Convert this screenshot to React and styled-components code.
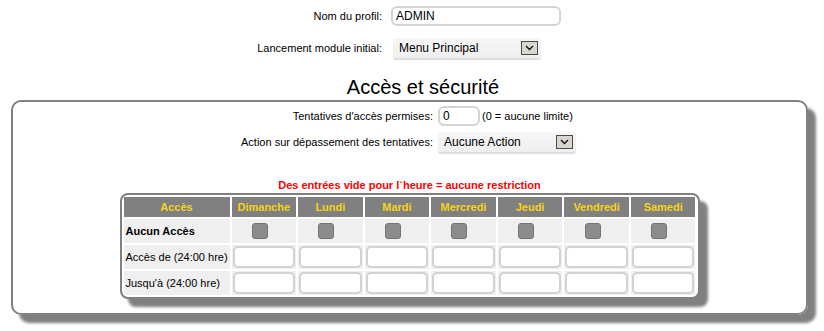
import React from "react";
import styled, { createGlobalStyle } from "styled-components";

const Global = createGlobalStyle`
  html, body { margin: 0; padding: 0; background: #fff; }
  body { font-family: "Liberation Sans", Arial, sans-serif; font-size: 11px; color: #000; }
`;

const Page = styled.div`
  width: 824px;
  height: 331px;
  overflow: hidden;
`;

const TopForm = styled.div`
  display: grid;
  grid-template-columns: 382px auto;
  column-gap: 9px;
  row-gap: 12px;
  padding-top: 6px;
  align-items: center;
`;

const Label = styled.label`
  text-align: right;
  font-size: 11px;
  white-space: nowrap;
`;

const TextInput = styled.input`
  box-sizing: border-box;
  width: ${(p) => p.$w}px;
  height: ${(p) => p.$h || 20}px;
  border: 2px solid #d4d4d4;
  border-radius: 6px;
  padding: 0 3px;
  font-family: "Liberation Sans", Arial, sans-serif;
  font-size: 12px;
  color: #000;
  background: #fff;
  outline: none;
`;

const Cell = styled.div`
  display: flex;
  align-items: center;
  gap: 2px;
  margin-left: ${(p) => p.$ml || 0}px;
`;

const Select = styled.div`
  box-sizing: border-box;
  width: ${(p) => p.$w}px;
  height: 20px;
  display: flex;
  align-items: center;
  justify-content: space-between;
  padding: 0 3px 0 6px;
  background: linear-gradient(#f6f6f6, #efefef);
  border-radius: 3px;
  box-shadow: 0 2px 1px #dcdcdc;
  font-size: 12px;
`;

const DropBtn = styled.span`
  box-sizing: border-box;
  width: 17px;
  height: 14px;
  border: 1px solid #4a4a4a;
  background: #d8d6cf;
  display: flex;
  align-items: center;
  justify-content: center;
`;

const Title = styled.h2`
  margin: 18px 0 0 0;
  padding-left: 22px;
  height: 24px;
  line-height: 23px;
  text-align: center;
  font-weight: normal;
  font-size: 20px;
`;

const Box = styled.div`
  box-sizing: border-box;
  margin-left: 11px;
  width: 797px;
  height: 215px;
  border: 2px solid #808080;
  border-radius: 10px;
  box-shadow: 8px 8px 3px #808080;
  padding-top: 4px;
  display: flex;
  flex-direction: column;
  align-items: center;
`;

const InnerForm = styled.div`
  align-self: stretch;
  display: grid;
  grid-template-columns: 420px auto;
  column-gap: 5px;
  row-gap: 6px;
  align-items: center;
`;

const Hint = styled.span`
  font-size: 11px;
`;

const Notice = styled.div`
  margin-top: 27px;
  height: 14px;
  line-height: 13px;
  color: #ff0000;
  font-weight: bold;
  font-size: 11px;
  text-align: center;
`;

const Schedule = styled.div`
  box-sizing: border-box;
  width: 580px;
  border: 2px solid #808080;
  border-radius: 8px;
  box-shadow: 8px 8px 3px #808080;
  background: #fff;
  padding: 2px;
  display: grid;
  grid-template-columns: 106px repeat(7, 1fr);
  grid-template-rows: 20px 24px 24px 24px;
  gap: 2px;
`;

const Head = styled.div`
  background: #808080;
  color: #f5d21a;
  font-weight: bold;
  font-size: 11px;
  display: flex;
  align-items: center;
  justify-content: center;
`;

const RowHead = styled.div`
  background: #efefef;
  display: flex;
  align-items: center;
  padding-left: 2px;
  font-size: 11px;
  font-weight: ${(p) => (p.$bold ? "bold" : "normal")};
  white-space: nowrap;
`;

const DayCell = styled.div`
  background: #efefef;
  display: flex;
  align-items: center;
  justify-content: center;
`;

const Check = styled.span`
  box-sizing: border-box;
  width: 16px;
  height: 16px;
  margin-right: 8px;
  border-radius: 3px;
  border: 1px solid #747474;
  background: #8c8c8c;
`;

const TimeInput = styled.input`
  box-sizing: border-box;
  width: calc(100% - 2px);
  height: 22px;
  border: 2px solid #d2d2d2;
  border-radius: 5px;
  background: #fff;
  outline: none;
  padding: 0 3px;
  font-family: "Liberation Sans", Arial, sans-serif;
`;

const Chevron = () => (
  <svg width="9" height="6" viewBox="0 0 9 6">
    <path d="M1 1 L4.5 4.5 L8 1" fill="none" stroke="#111" strokeWidth="1.4" />
  </svg>
);

const days = ["Dimanche", "Lundi", "Mardi", "Mercredi", "Jeudi", "Vendredi", "Samedi"];

export default function App() {
  return (
    <Page>
      <Global />
      <TopForm>
        <Label>Nom du profil:</Label>
        <TextInput $w={170} defaultValue="ADMIN" readOnly />
        <Label>Lancement module initial:</Label>
        <Cell $ml={2}>
          <Select $w={148}>
            <span>Menu Principal</span>
            <DropBtn><Chevron /></DropBtn>
          </Select>
        </Cell>
      </TopForm>
      <Title>Accès et sécurité</Title>
      <Box>
        <InnerForm>
          <Label>Tentatives d'accès permises:</Label>
          <Cell>
            <TextInput $w={42} $h={20} defaultValue="0" readOnly />
            <Hint>(0 = aucune limite)</Hint>
          </Cell>
          <Label>Action sur dépassement des tentatives:</Label>
          <Select $w={138}>
            <span>Aucune Action</span>
            <DropBtn><Chevron /></DropBtn>
          </Select>
        </InnerForm>
        <Notice>Des entrées vide pour l`heure = aucune restriction</Notice>
        <Schedule>
          <Head>Accès</Head>
          {days.map((d) => (
            <Head key={d}>{d}</Head>
          ))}
          <RowHead $bold>Aucun Accès</RowHead>
          {days.map((d) => (
            <DayCell key={d}><Check /></DayCell>
          ))}
          <RowHead>Accès de (24:00 hre)</RowHead>
          {days.map((d) => (
            <DayCell key={d}><TimeInput readOnly /></DayCell>
          ))}
          <RowHead>Jusqu'à (24:00 hre)</RowHead>
          {days.map((d) => (
            <DayCell key={d}><TimeInput readOnly /></DayCell>
          ))}
        </Schedule>
      </Box>
    </Page>
  );
}
